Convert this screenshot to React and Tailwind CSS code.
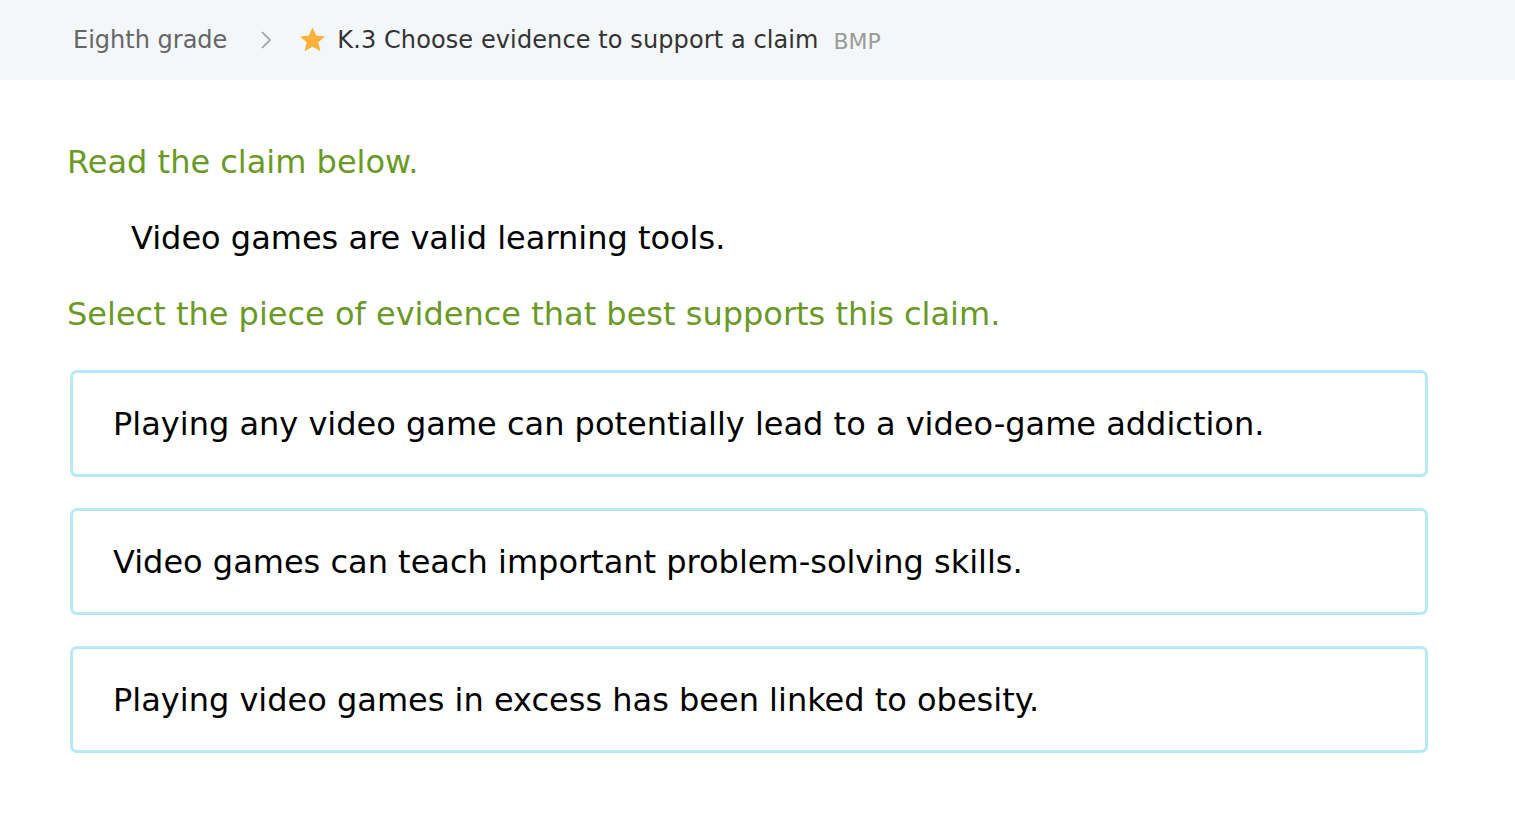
import React from "react";

const font = { fontFamily: '"DejaVu Sans", Verdana, sans-serif' };

function Star() {
  return (
    <svg width="29" height="28" viewBox="0 0 24 24" className="shrink-0">
      <path
        d="M12 1.2l3.2 7 7.6.7-5.8 5.1 1.8 7.6L12 17.7l-6.8 3.9 1.8-7.6-5.8-5.1 7.6-.7z"
        fill="#fbb13b"
      />
    </svg>
  );
}

function Chevron() {
  return (
    <svg width="14" height="22" viewBox="0 0 14 22" className="shrink-0">
      <path d="M3 3l8 8-8 8" fill="none" stroke="#9a9a9a" strokeWidth="1.6" />
    </svg>
  );
}

const options = [
  "Playing any video game can potentially lead to a video-game addiction.",
  "Video games can teach important problem-solving skills.",
  "Playing video games in excess has been linked to obesity.",
];

export default function App() {
  return (
    <div className="min-h-[830px] w-full bg-white" style={font}>
      <div className="h-[80px] bg-[#f4f7f9] flex items-center pl-[73px]">
        <span className="text-[24px] text-[#666666]">Eighth grade</span>
        <span className="ml-[32px] mr-[25px] flex items-center">
          <Chevron />
        </span>
        <Star />
        <span className="ml-[10px] text-[24px] text-[#333333] tracking-[0.1px]">
          K.3 Choose evidence to support a claim
        </span>
        <span className="ml-[15px] text-[22px] text-[#9a9a9a] mt-[3px]">BMP</span>
      </div>

      <div className="pl-[67px] pr-[88px]">
        <div className="pt-[62px] text-[32px] leading-[40px] text-[#6a9a26]">
          Read the claim below.
        </div>
        <div className="pt-[36px] pl-[64px] text-[32px] leading-[40px] text-black">
          Video games are valid learning tools.
        </div>
        <div className="pt-[36px] text-[32px] leading-[40px] text-[#6a9a26]">
          Select the piece of evidence that best supports this claim.
        </div>
        <div className="mt-[36px] flex flex-col gap-[31px] pl-[3px]">
          {options.map((o) => (
            <div
              key={o}
              className="h-[107px] w-[1358px] rounded-[7px] border-[3px] border-[#b4eaf8] flex items-center pl-[40px] text-[32px] text-black"
            >
              {o}
            </div>
          ))}
        </div>
      </div>
    </div>
  );
}
